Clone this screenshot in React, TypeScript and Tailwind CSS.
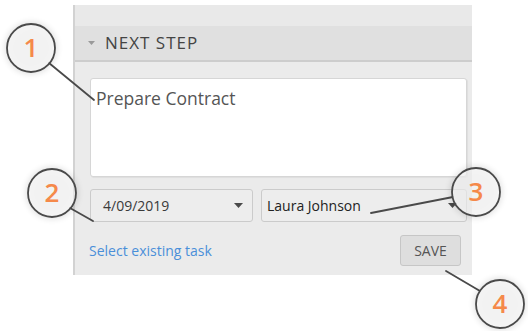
import React from 'react'

const FONT = { fontFamily: '"Open Sans", "Noto Sans", sans-serif' }

function Caret() {
  return (
    <svg width="9" height="5" viewBox="0 0 9 5" className="shrink-0">
      <path d="M0 0 L9 0 L4.5 5 Z" fill="#4a4a4a" />
    </svg>
  )
}

function Dropdown({ value, className }: { value: string; className: string }) {
  return (
    <div
      className={`flex h-[33px] items-center justify-between rounded-[3px] border border-[#cbcbcb] bg-[#ededed] pr-[9px] ${className}`}
    >
      <span className="text-[14px]">{value}</span>
      <Caret />
    </div>
  )
}

// callout circles with pointer lines, laid over the panel
function Callouts() {
  const circles = [
    { n: '1', cx: 31, cy: 48 },
    { n: '2', cx: 52, cy: 193 },
    { n: '3', cx: 476, cy: 192 },
    { n: '4', cx: 500, cy: 304 },
  ]
  return (
    <svg
      width="528"
      height="331"
      viewBox="0 0 528 331"
      className="pointer-events-none absolute left-0 top-0"
    >
      <defs>
        <filter id="glow" x="-50%" y="-50%" width="200%" height="200%">
          <feGaussianBlur stdDeviation="3" />
        </filter>
      </defs>
      <g stroke="#4a4a4a" strokeWidth="1.8" strokeLinecap="round">
        <line x1="49" y1="63" x2="94" y2="100" />
        <line x1="70" y1="208" x2="93" y2="221" />
        <line x1="371" y1="213" x2="453" y2="197" />
        <line x1="446" y1="271" x2="480" y2="291" />
      </g>
      {circles.map(c => (
        <g key={c.n}>
          <circle cx={c.cx} cy={c.cy} r="26" fill="#000" opacity="0.12" filter="url(#glow)" />
          <circle
            cx={c.cx}
            cy={c.cy}
            r="24"
            fill="#ffffff"
            fillOpacity="0.6"
            stroke="#4a4a4a"
            strokeWidth="1.8"
          />
          <text
            x={c.cx}
            y={c.cy + 9}
            textAnchor="middle"
            fontSize="26"
            fontWeight="600"
            fill="#f5894a"
            style={FONT}
          >
            {c.n}
          </text>
        </g>
      ))}
    </svg>
  )
}

export default function App() {
  return (
    <div className="relative h-[331px] w-[528px] overflow-hidden bg-white" style={FONT}>
      <div className="ml-[73px] mt-[5px] flex h-[270px] w-[399px] flex-col border-l-2 border-[#d2d2d2] bg-[#ebebeb]">
        <div className="h-[21px] bg-[#e9e9e9]" />
        <div className="flex h-[36px] items-center gap-[10px] border-b-2 border-[#cdcdcd] bg-[#e0e0e0] pl-[13px]">
          <svg width="7" height="4" viewBox="0 0 7 4">
            <path d="M0 0 L7 0 L3.5 4 Z" fill="#9a9a9a" />
          </svg>
          <span className="text-[17px] tracking-[1px] text-[#444]">NEXT STEP</span>
        </div>
        <div className="flex flex-1 flex-col pl-[15px] pr-[5px] pt-[16px]">
          <div className="h-[99px] rounded-[3px] border border-[#d6d6d6] bg-white px-[5px] pt-[6px] shadow-[1px_1px_1px_rgba(0,0,0,0.06)]">
            <span className="text-[17.5px] text-[#555]">Prepare Contract</span>
          </div>
          <div className="mt-[12px] flex gap-[8px]">
            <Dropdown value="4/09/2019" className="w-[163px] pl-[12px] text-[#3a3a3a]" />
            <Dropdown value="Laura Johnson" className="flex-1 pl-[5px] text-[#222]" />
          </div>
          <div className="mt-[13px] flex items-center justify-between pr-[6px]">
            <span className="-ml-[1px] text-[14px] text-[#4a8fd9]">Select existing task</span>
            <div className="flex h-[31px] w-[61px] items-center justify-center rounded-[3px] border border-[#c6c6c6] bg-[#dedede] text-[14px] text-[#555]">
              SAVE
            </div>
          </div>
        </div>
      </div>
      <Callouts />
    </div>
  )
}
